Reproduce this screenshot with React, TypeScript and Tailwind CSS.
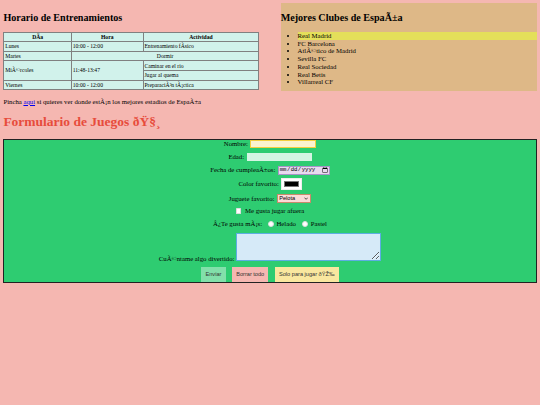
import React from "react";

export default function App() {
  return (
    <div className="min-h-screen overflow-hidden bg-[#f5b7b1]">
      <div className="[zoom:0.421875] w-[1280px] p-[8px] text-[16px] leading-[18.4px] text-black [font-family:'Liberation_Serif','Times_New_Roman',serif]">
        <div className="flex justify-between">
          <div className="w-[48%]">
            <h2 className="my-[19.92px] text-[24px] leading-[27.6px] font-bold">Horario de Entrenamientos</h2>
            <table className="w-full border-collapse border border-[#808080] bg-[#d1f2eb] text-[13.33px] leading-[15.33px]">
              <thead>
                <tr>
                  <th className="w-[160px] border border-[#808080] px-[2px] py-[2.5px] text-center font-bold">{"DÃ\u00ADa"}</th>
                  <th className="w-[170px] border border-[#808080] px-[2px] py-[2.5px] text-center font-bold">Hora</th>
                  <th className="border border-[#808080] px-[2px] py-[2.5px] text-center font-bold">Actividad</th>
                </tr>
              </thead>
              <tbody>
                <tr>
                  <td className="border border-[#808080] px-[2px] py-[2.5px]">Lunes</td>
                  <td className="border border-[#808080] px-[2px] py-[2.5px]">10:00 - 12:00</td>
                  <td className="border border-[#808080] px-[2px] py-[2.5px]">{"Entrenamiento fÃ\u00ADsico"}</td>
                </tr>
                <tr>
                  <td className="border border-[#808080] px-[2px] py-[2.5px]">Martes</td>
                  <td colSpan={2} className="border border-[#808080] px-[2px] py-[2.5px] text-center">Dormir</td>
                </tr>
                <tr>
                  <td rowSpan={2} className="border border-[#808080] px-[2px] py-[2.5px] align-middle">MiÃ©rcoles</td>
                  <td rowSpan={2} className="border border-[#808080] px-[2px] py-[2.5px] align-middle">11:48-13:47</td>
                  <td className="border border-[#808080] px-[2px] py-[2.5px]">Caminar en el rio</td>
                </tr>
                <tr>
                  <td className="border border-[#808080] px-[2px] py-[2.5px]">Jugar al quema</td>
                </tr>
                <tr>
                  <td className="border border-[#808080] px-[2px] py-[2.5px]">Viernes</td>
                  <td className="border border-[#808080] px-[2px] py-[2.5px]">10:00 - 12:00</td>
                  <td className="border border-[#808080] px-[2px] py-[2.5px]">PreparaciÃ³n tÃ¡ctica</td>
                </tr>
              </tbody>
            </table>
          </div>
          <div className="w-[48%] self-start bg-[#deb887]">
            <h2 className="my-[19.92px] text-[24px] leading-[27.6px] font-bold">Mejores Clubes de EspaÃ±a</h2>
            <ul className="mt-[16px] mb-[11px] list-disc pl-[40px]">
              <li className="bg-[#e4df5a]">Real Madrid</li>
              <li>FC Barcelona</li>
              <li>AtlÃ©tico de Madrid</li>
              <li>Sevilla FC</li>
              <li>Real Sociedad</li>
              <li>Real Betis</li>
              <li>Villarreal CF</li>
            </ul>
          </div>
        </div>

        <p className="my-[16px]">
          Pincha <a href="#" className="text-[#0000ee] underline">aqui</a> si quieres ver donde estÃ¡n los mejores estadios de EspaÃ±a
        </p>

        <h1 className="my-[21.44px] text-[32px] leading-[36.8px] font-bold text-[#e74c3c]">Formulario de Juegos ðŸ§¸</h1>

        <form className="flex flex-col items-center border-2 border-[#222] bg-[#2ecc71]">
          <div className="flex h-[20px] items-center gap-[6px]">
            <label>Nombre:</label>
            <input type="text" className="h-[20px] w-[156px] border-2 border-[#f4d03f] bg-[#fcf3cf]" />
          </div>
          <div className="mt-[11px] flex h-[18px] items-center gap-[6px]">
            <label>Edad:</label>
            <input type="text" className="h-[18px] w-[154px] bg-[#d5f5e3]" />
          </div>
          <div className="mt-[12px] flex h-[21px] items-center gap-[6px]">
            <label>Fecha de cumpleaÃ±os:</label>
            <input type="date" className="h-[21px] w-[123px] border-2 border-[#a993c9] bg-[#e8daef] px-[1px] text-[13.33px] [font-family:'Liberation_Mono',monospace]" />
          </div>
          <div className="mt-[9px] flex h-[27px] items-center gap-[5px]">
            <label>Color favorito:</label>
            <input type="color" defaultValue="#000000" className="h-[27px] w-[49px] border border-[#eeeeee] bg-white px-[2px] py-[1px]" />
          </div>
          <div className="mt-[10px] flex h-[22px] items-center gap-[5px]">
            <label>Juguete favorito:</label>
            <div className="relative h-[22px] w-[82px]">
              <select className="h-[22px] w-[82px] appearance-none border-2 border-[#c98a6b] bg-[#fadbd8] pl-[4px] text-[13.33px] [font-family:'Liberation_Sans',Arial,sans-serif]">
                <option>Pelota</option>
                <option>Muñeca</option>
                <option>Coche</option>
              </select>
              <svg className="pointer-events-none absolute right-[8px] top-[8px]" width="10" height="7" viewBox="0 0 10 7">
                <path d="M1 1.5 L5 5.5 L9 1.5" fill="none" stroke="#333" strokeWidth="2" />
              </svg>
            </div>
          </div>
          <div className="mt-[9px] flex h-[20px] items-center gap-[9px]">
            <input type="checkbox" className="h-[13px] w-[13px] appearance-none rounded-[2px] border border-[#dddddd] bg-white" />
            <label>Me gusta jugar afuera</label>
          </div>
          <div className="mt-[10px] flex h-[20px] items-center">
            <span className="mr-[14px]">Â¿Te gusta mÃ¡s:</span>
            <input type="radio" name="gusto" className="mr-[7px] h-[13px] w-[13px] appearance-none rounded-full border border-[#dddddd] bg-white" />
            <label className="mr-[15px]">Helado</label>
            <input type="radio" name="gusto" className="mr-[7px] h-[13px] w-[13px] appearance-none rounded-full border border-[#dddddd] bg-white" />
            <label>Pastel</label>
          </div>
          <div className="mt-[11px] flex h-[68px] items-end gap-[4px]">
            <label className="mb-[-3px]">CuÃ©ntame algo divertido:</label>
            <textarea className="h-[68px] w-[344px] border-2 border-[#5dade2] bg-[#d6eaf8]" />
          </div>
          <div className="mt-[14px] flex h-[34px] items-end gap-[15px] text-[13.33px] text-[#333] [font-family:'Liberation_Sans',Arial,sans-serif]">
            <button type="submit" className="bg-[#82e0aa] px-[10px] py-[10px] leading-[14px]">Enviar</button>
            <button type="reset" className="bg-[#f5b7b1] px-[10px] py-[10px] leading-[14px]">Borrar todo</button>
            <button type="button" className="bg-[#f9e79f] px-[10px] py-[10px] leading-[14px]">Solo para jugar ðŸŽ‰</button>
          </div>
        </form>
      </div>
    </div>
  );
}
